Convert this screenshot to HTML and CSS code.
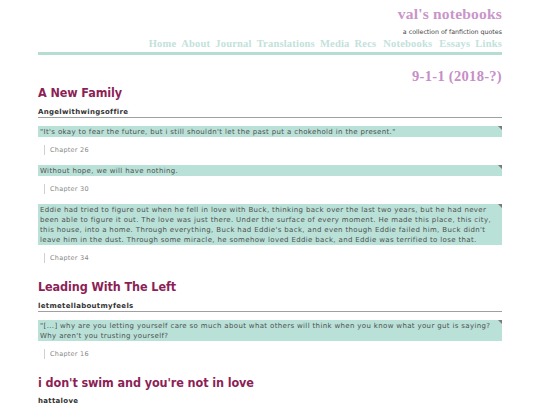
FILE: index.html
```html
<!DOCTYPE html>
<html lang="en">
<head>
<meta charset="utf-8">
<title>val's notebooks</title>
<link rel="stylesheet" href="styles.css">
</head>
<body>
<div class="page">
  <header class="site-header">
    <h1 class="site-title">val's notebooks</h1>
    <p class="tagline">a collection of fanfiction quotes</p>
    <nav class="nav">
      <a href="#">Home</a>
      <a href="#">About</a>
      <a href="#">Journal</a>
      <a href="#">Translations</a>
      <a href="#">Media</a>
      <a href="#" class="wide">Recs</a>
      <a href="#" class="wide">Notebooks</a>
      <a href="#">Essays</a>
      <a href="#">Links</a>
    </nav>
    <div class="bar"></div>
  </header>

  <h2 class="fandom">9-1-1 (2018-?)</h2>

  <section class="fic">
    <h3 class="fic-title">A New Family</h3>
    <div class="author">Angelwithwingsoffire</div>
    <div class="quote"><p>"It's okay to fear the future, but i still shouldn't let the past put a chokehold in the present."</p><span class="corner"></span></div>
    <div class="cite">Chapter 26</div>
    <div class="quote"><p>Without hope, we will have nothing.</p><span class="corner"></span></div>
    <div class="cite">Chapter 30</div>
    <div class="quote"><p>Eddie had tried to figure out when he fell in love with Buck, thinking back over the last two years, but he had never been able to figure it out. The love was just there. Under the surface of every moment. He made this place, this city, this house, into a home. Through everything, Buck had Eddie's back, and even though Eddie failed him, Buck didn't leave him in the dust. Through some miracle, he somehow loved Eddie back, and Eddie was terrified to lose that.</p><span class="corner"></span></div>
    <div class="cite">Chapter 34</div>
  </section>

  <section class="fic">
    <h3 class="fic-title">Leading With The Left</h3>
    <div class="author">letmetellaboutmyfeels</div>
    <div class="quote"><p>"[...] why are you letting yourself care so much about what others will think when you know what your gut is saying? Why aren't you trusting yourself?</p><span class="corner"></span></div>
    <div class="cite">Chapter 16</div>
  </section>

  <section class="fic">
    <h3 class="fic-title">i don't swim and you're not in love</h3>
    <div class="author">hattalove</div>
  </section>
</div>
</body>
</html>
```

FILE: styles.css
```css
html, body {
  margin: 0;
  padding: 0;
  background: #ffffff;
}

.page {
  width: 464px;
  margin: 0 auto;
  font-family: "DejaVu Sans", Verdana, sans-serif;
}

.site-header {
  display: flex;
  flex-direction: column;
  align-items: flex-end;
  padding-top: 5px;
}

.site-title {
  margin: 0;
  font-family: "Liberation Serif", Georgia, serif;
  font-weight: bold;
  font-size: 15.5px;
  line-height: 18px;
  letter-spacing: 0.2px;
  color: #c996c9;
}

.tagline {
  margin: 5px 0 0;
  font-size: 6.3px;
  line-height: 8px;
  color: #444444;
}

.nav {
  display: flex;
  gap: 5px;
  margin-top: 2px;
  font-family: "Liberation Serif", Georgia, serif;
  font-weight: bold;
  font-size: 10.5px;
  line-height: 12px;
  letter-spacing: 0.2px;
}

.nav a {
  color: #c2e2db;
  text-decoration: none;
}

.nav a.wide {
  margin-right: 2px;
}

.bar {
  align-self: stretch;
  height: 3px;
  margin-top: 2px;
  background: #b6ddd4;
}

.fandom {
  margin: 12px 0 0;
  text-align: right;
  font-family: "Liberation Serif", Georgia, serif;
  font-weight: bold;
  font-size: 14.5px;
  line-height: 18px;
  letter-spacing: 0.3px;
  color: #c68ec6;
}

.fic {
  display: flex;
  flex-direction: column;
}

.fic-title {
  margin: 0;
  font-family: "DejaVu Sans Condensed", "DejaVu Sans", sans-serif;
  font-stretch: condensed;
  font-size: 12.5px;
  line-height: 16px;
  letter-spacing: -0.1px;
  font-weight: bold;
  color: #8c1f57;
}

.fic + .fic .fic-title {
  margin-top: 15px;
}

.author {
  margin-top: 7px;
  padding-bottom: 1px;
  border-bottom: 1px solid #a0a0a0;
  font-size: 7px;
  line-height: 8px;
  letter-spacing: 0.3px;
  font-weight: bold;
  color: #333333;
}

.fic:last-child .author {
  margin-top: 6px;
}

.quote {
  position: relative;
  margin-top: 8px;
  padding: 0.5px 3px 0.5px 2px;
  background: #b9e1d7;
}

.quote p {
  margin: 0;
  font-size: 7px;
  line-height: 10px;
  letter-spacing: 0.35px;
  color: #505050;
}

.corner {
  position: absolute;
  top: 0;
  right: 0;
  width: 0;
  height: 0;
  border-style: solid;
  border-width: 0 4px 4px 0;
  border-color: transparent #7a7a7a transparent transparent;
}

.cite {
  margin: 8px 0 1px 6px;
  padding: 1px 0 1px 5px;
  border-left: 1px solid #d0d0d0;
  font-size: 6.5px;
  line-height: 8px;
  letter-spacing: 0.25px;
  color: #888888;
}

.cite + .quote {
  margin-top: 9px;
}
```
